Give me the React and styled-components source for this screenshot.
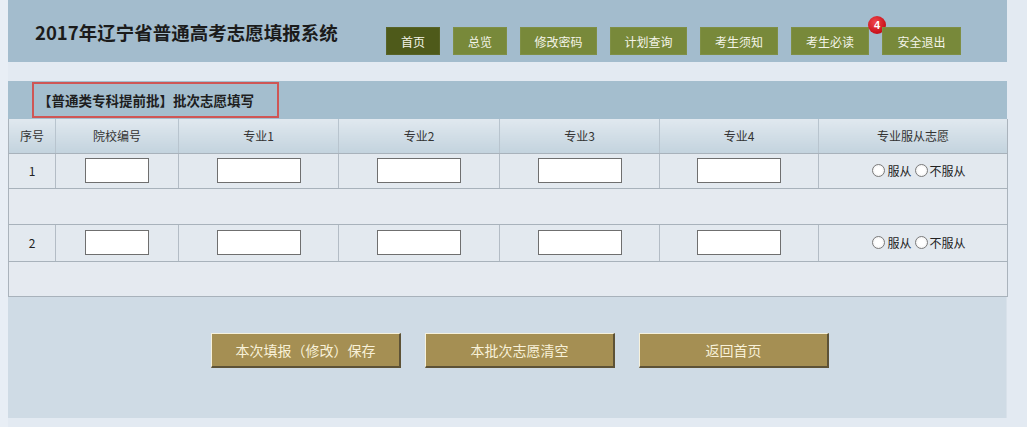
import React from "react";
import styled, { createGlobalStyle } from "styled-components";

const Global = createGlobalStyle`
  html, body { margin: 0; padding: 0; background: #e4ebf3; }
  body { font-family: "Noto Sans CJK SC", "Noto Sans", sans-serif; color: #222; }
  * { box-sizing: border-box; }
`;

const Page = styled.div`
  width: 1027px;
  height: 427px;
  padding: 0 8px;
  background: linear-gradient(to right, #e8eef5 0, #e8eef5 8px, #e3eaf2 8px);
  overflow: hidden;
`;

const Header = styled.header`
  width: 999px;
  height: 62px;
  background: #a3bccd;
  display: flex;
  align-items: flex-start;
  padding-left: 27px;
`;

const Title = styled.h1`
  width: 351px;
  margin: 20px 0 0;
  font-size: 18.5px;
  line-height: 24px;
  font-weight: 700;
  color: #1b1b1b;
  white-space: nowrap;
`;

const Nav = styled.nav`
  display: flex;
  gap: 13px;
  margin-top: 27px;
`;

const NavButton = styled.a`
  position: relative;
  display: flex;
  align-items: center;
  justify-content: center;
  width: ${(p) => p.$w}px;
  height: 28px;
  background: ${(p) => (p.$active ? "#4e5a1a" : "#78893a")};
  color: #f4f4e8;
  font-size: 12px;
  text-decoration: none;
  box-shadow: inset 0 0 0 1px rgba(255,255,255,0.06);
`;

const Badge = styled.span`
  position: absolute;
  top: -11px;
  right: -17px;
  width: 18px;
  height: 18px;
  border-radius: 50%;
  background: radial-gradient(circle at 40% 35%, #f0474c, #c8101a 70%);
  color: #fff;
  font-size: 11px;
  font-weight: 700;
  line-height: 18px;
  text-align: center;
  font-family: "Liberation Sans", sans-serif;
`;

const Panel = styled.section`
  width: 999px;
  margin-top: 19px;
`;

const PanelBar = styled.div`
  height: 38px;
  background: #a4bece;
  display: flex;
  align-items: center;
  padding-left: 24px;
`;

const PanelTitle = styled.div`
  height: 36px;
  width: 247px;
  border: 2px solid #cf5655;
  display: flex;
  align-items: center;
  padding-left: 4px;
  font-size: 13.5px;
  font-weight: 700;
  color: #1e1e1e;
  white-space: nowrap;
`;

const Table = styled.table`
  width: 999px;
  border-collapse: collapse;
  table-layout: fixed;
  border-left: 1px solid #aab3bc;
  border-right: 1px solid #aab3bc;
`;

const Th = styled.th`
  height: 34px;
  font-size: 12px;
  font-weight: 400;
  color: #333;
  background: linear-gradient(#e0e8ef, #c3d3de);
  border-left: 1px solid #b8c4ce;
  border-bottom: 1px solid #a8b2bb;
  padding: 0;
  &:first-child { border-left: none; }
`;

const Td = styled.td`
  height: ${(p) => p.$h}px;
  font-size: 12px;
  color: #222;
  text-align: center;
  background: #e3e9ef;
  border-left: 1px solid #b3bcc5;
  border-bottom: 1px solid #a8b2bb;
  padding: 0;
  &:first-child { border-left: none; }
`;

const SpacerCell = styled.td`
  height: ${(p) => p.$h}px;
  background: #e5eaf0;
  border-bottom: 1px solid #a8b2bb;
  padding: 0;
`;

const Input = styled.input`
  width: ${(p) => p.$w}px;
  height: 25px;
  border: 1px solid #6f6f6f;
  background: #fff;
  padding: 0;
  margin: 0;
  vertical-align: middle;
`;

const RadioGroup = styled.div`
  display: flex;
  align-items: center;
  justify-content: center;
  gap: 3px;
  padding-left: 12px;
`;

const RadioLabel = styled.label`
  display: flex;
  align-items: center;
  gap: 2px;
  font-size: 12px;
  color: #222;
`;

const RadioCircle = styled.span`
  display: inline-block;
  width: 13px;
  height: 13px;
  border-radius: 50%;
  border: 1px solid #7a7a7a;
  background: radial-gradient(circle, #fff 40%, #e8e8e8);
`;

const Footer = styled.div`
  height: 121px;
  background: #cfdbe5;
  display: flex;
  align-items: flex-start;
  gap: 24px;
  padding: 36px 0 0 203px;
  border-right: 1px solid #d8e1ea;
`;

const GoldButton = styled.button`
  width: 190px;
  height: 35px;
  background: #a58f53;
  color: #f8f1d8;
  font-family: "Noto Sans CJK SC", sans-serif;
  font-size: 14px;
  border: 1px solid;
  border-color: #f6f1dc #5d5236 #5d5236 #f6f1dc;
  border-bottom-width: 2px;
  border-right-width: 2px;
  padding: 0;
  cursor: pointer;
`;

const cols = [
  { label: "序号", w: 47 },
  { label: "院校编号", w: 123 },
  { label: "专业1", w: 160 },
  { label: "专业2", w: 161 },
  { label: "专业3", w: 160 },
  { label: "专业4", w: 159 },
  { label: "专业服从志愿", w: 189 },
];

const navItems = [
  { label: "首页", w: 54, active: true },
  { label: "总览", w: 54 },
  { label: "修改密码", w: 77 },
  { label: "计划查询", w: 77 },
  { label: "考生须知", w: 78 },
  { label: "考生必读", w: 78, badge: "4" },
  { label: "安全退出", w: 79 },
];

function Radios() {
  return (
    <RadioGroup>
      <RadioLabel><RadioCircle />服从</RadioLabel>
      <RadioLabel><RadioCircle />不服从</RadioLabel>
    </RadioGroup>
  );
}

function DataRow({ n, h }) {
  return (
    <tr>
      <Td $h={h}>{n}</Td>
      <Td $h={h}><Input $w={64} /></Td>
      <Td $h={h}><Input $w={84} /></Td>
      <Td $h={h}><Input $w={84} /></Td>
      <Td $h={h}><Input $w={84} /></Td>
      <Td $h={h}><Input $w={84} /></Td>
      <Td $h={h}><Radios /></Td>
    </tr>
  );
}

export default function App() {
  return (
    <>
      <Global />
      <Page>
        <Header>
          <Title>2017年辽宁省普通高考志愿填报系统</Title>
          <Nav>
            {navItems.map((it) => (
              <NavButton key={it.label} $w={it.w} $active={it.active}>
                {it.label}
                {it.badge && <Badge>{it.badge}</Badge>}
              </NavButton>
            ))}
          </Nav>
        </Header>
        <Panel>
          <PanelBar>
            <PanelTitle>【普通类专科提前批】批次志愿填写</PanelTitle>
          </PanelBar>
          <Table>
            <colgroup>
              {cols.map((c) => (
                <col key={c.label} style={{ width: c.w }} />
              ))}
            </colgroup>
            <thead>
              <tr>
                {cols.map((c) => (
                  <Th key={c.label}>{c.label}</Th>
                ))}
              </tr>
            </thead>
            <tbody>
              <DataRow n="1" h={35} />
              <tr><SpacerCell colSpan={7} $h={36} /></tr>
              <DataRow n="2" h={37} />
              <tr><SpacerCell colSpan={7} $h={35} /></tr>
            </tbody>
          </Table>
          <Footer>
            <GoldButton>本次填报（修改）保存</GoldButton>
            <GoldButton>本批次志愿清空</GoldButton>
            <GoldButton>返回首页</GoldButton>
          </Footer>
        </Panel>
      </Page>
    </>
  );
}
